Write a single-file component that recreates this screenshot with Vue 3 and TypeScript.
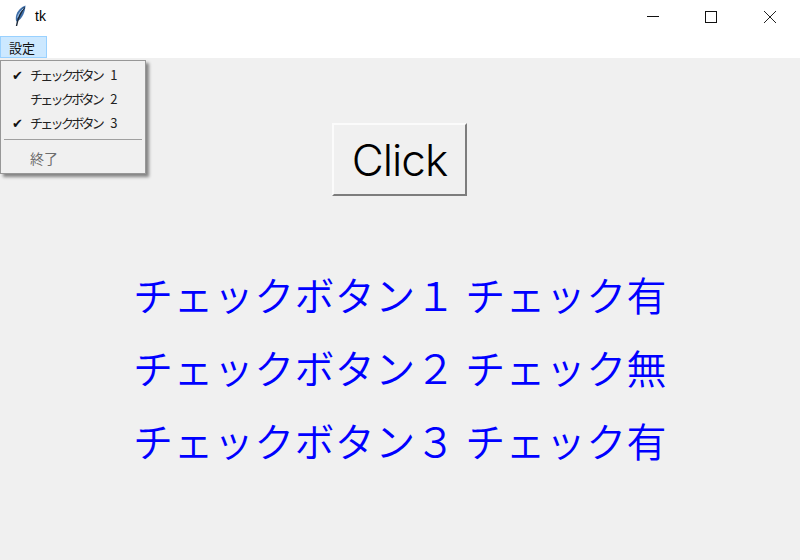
<script setup lang="ts">
const items = [
  { label: 'チェックボタン 1', checked: true },
  { label: 'チェックボタン 2', checked: false },
  { label: 'チェックボタン 3', checked: true },
]
const rows = [
  { name: 'チェックボタン１', state: 'チェック有' },
  { name: 'チェックボタン２', state: 'チェック無' },
  { name: 'チェックボタン３', state: 'チェック有' },
]
</script>

<template>
  <div class="window">
    <header class="titlebar">
      <div class="title-left">
        <svg class="feather" width="14" height="22" viewBox="0 0 14 22">
          <path d="M12.500 0.500C8 2 4 6 3 11c-.4 2.500-.2 4 .2 5.500L5.500 15.500C9.500 13 12 7 12.500 .5z" fill="#3f6ea8" />
          <path d="M11.500 2.500C8 7 5 12 3.500 21" stroke="#1d2a3a" stroke-width="1.400" fill="none" />
          <path d="M10.500 3.500C7.500 6 5.500 9 4.500 12.500" stroke="#a6c6e8" stroke-width="1" fill="none" />
        </svg>
        <span class="title-text">tk</span>
      </div>
      <div class="controls">
        <svg width="58" height="36" viewBox="0 0 58 36"><path d="M22 16.500h12" stroke="#111" fill="none" /></svg>
        <svg width="58" height="36" viewBox="0 0 58 36"><rect x="22.500" y="11.500" width="11" height="11" stroke="#111" fill="none" /></svg>
        <svg width="58" height="36" viewBox="0 0 58 36"><path d="M23 11l12 12M35 11L23 23" stroke="#222" fill="none" /></svg>
      </div>
    </header>
    <nav class="menubar"><span class="menu-title">設定</span></nav>
    <main class="content">
      <button class="click" type="button">Click</button>
      <div class="rows">
        <div v-for="r in rows" :key="r.name" class="row">{{ r.name }} {{ r.state }}</div>
      </div>
    </main>
    <div class="dropdown">
      <div v-for="i in items" :key="i.label" class="item">
        <span class="check">{{ i.checked ? '✔' : '' }}</span>{{ i.label }}
      </div>
      <div class="sep"></div>
      <div class="item disabled"><span class="check"></span>終了</div>
    </div>
  </div>
</template>

<style>
html, body { margin: 0; padding: 0; background: #f0f0f0; }
</style>

<style scoped>
.window {
  position: relative;
  width: 800px;
  height: 560px;
  overflow: hidden;
  display: flex;
  flex-direction: column;
  background: #f0f0f0;
  font-family: "Noto Sans CJK JP", "Noto Sans", sans-serif;
}
.titlebar {
  height: 36px;
  flex: none;
  background: #fff;
  display: flex;
  align-items: center;
  justify-content: space-between;
}
.title-left { display: flex; align-items: center; padding-left: 13px; gap: 8px; margin-top: -4px; }
.title-text { font: 14px "Liberation Sans", sans-serif; color: #000; }
.controls { display: flex; margin-right: 1px; }
.controls svg { display: block; margin-top: -1px; }
.menubar {
  height: 22px;
  flex: none;
  background: #fff;
  display: flex;
}
.menu-title {
  width: 47px;
  box-sizing: border-box;
  height: 22px;
  padding-left: 8px;
  font-size: 13px;
  line-height: 21px;
  color: #111;
  background: #cce8ff;
  border: 1px solid #99d1ff;
}
.content {
  flex: 1;
  display: flex;
  flex-direction: column;
  align-items: center;
}
.click {
  margin-top: 65px;
  margin-right: 1px;
  width: 135px;
  height: 73px;
  box-sizing: border-box;
  padding: 0;
  font-family: "Inter", "Noto Sans", sans-serif;
  font-size: 44px;
  font-weight: 300;
  letter-spacing: -1px;
  color: #000;
  background: #f0f0f0;
  border: 2px solid;
  border-color: #fbfbfb #7d7d7d #7d7d7d #fbfbfb;
}
.rows {
  margin-top: 69px;
  display: flex;
  flex-direction: column;
  gap: 14px;
}
.row {
  font-size: 40px;
  line-height: 59px;
  font-weight: 350;
  letter-spacing: 0.35px;
  color: #0000ff;
  white-space: pre;
}
.dropdown {
  position: absolute;
  left: 0;
  top: 60px;
  width: 146px;
  height: 114px;
  box-sizing: border-box;
  background: #f0f0f0;
  border: 1px solid #979797;
  box-shadow: 3px 3px 3px rgba(0, 0, 0, 0.45);
  padding-top: 2px;
}
.item {
  height: 24px;
  line-height: 24px;
  font-size: 13px;
  letter-spacing: -2.7px;
  word-spacing: 8px;
  color: #222;
  display: flex;
  align-items: center;
  white-space: pre;
}
.check { width: 29px; flex: none; font-size: 13px; letter-spacing: 0; text-align: center; padding-left: 3px; box-sizing: border-box; color: #111; }
.sep { height: 1px; background: #a0a0a0; margin: 4px 3px 6px 3px; }
.disabled { color: #6d6d6d; font-size: 14px; letter-spacing: 0; }
</style>
